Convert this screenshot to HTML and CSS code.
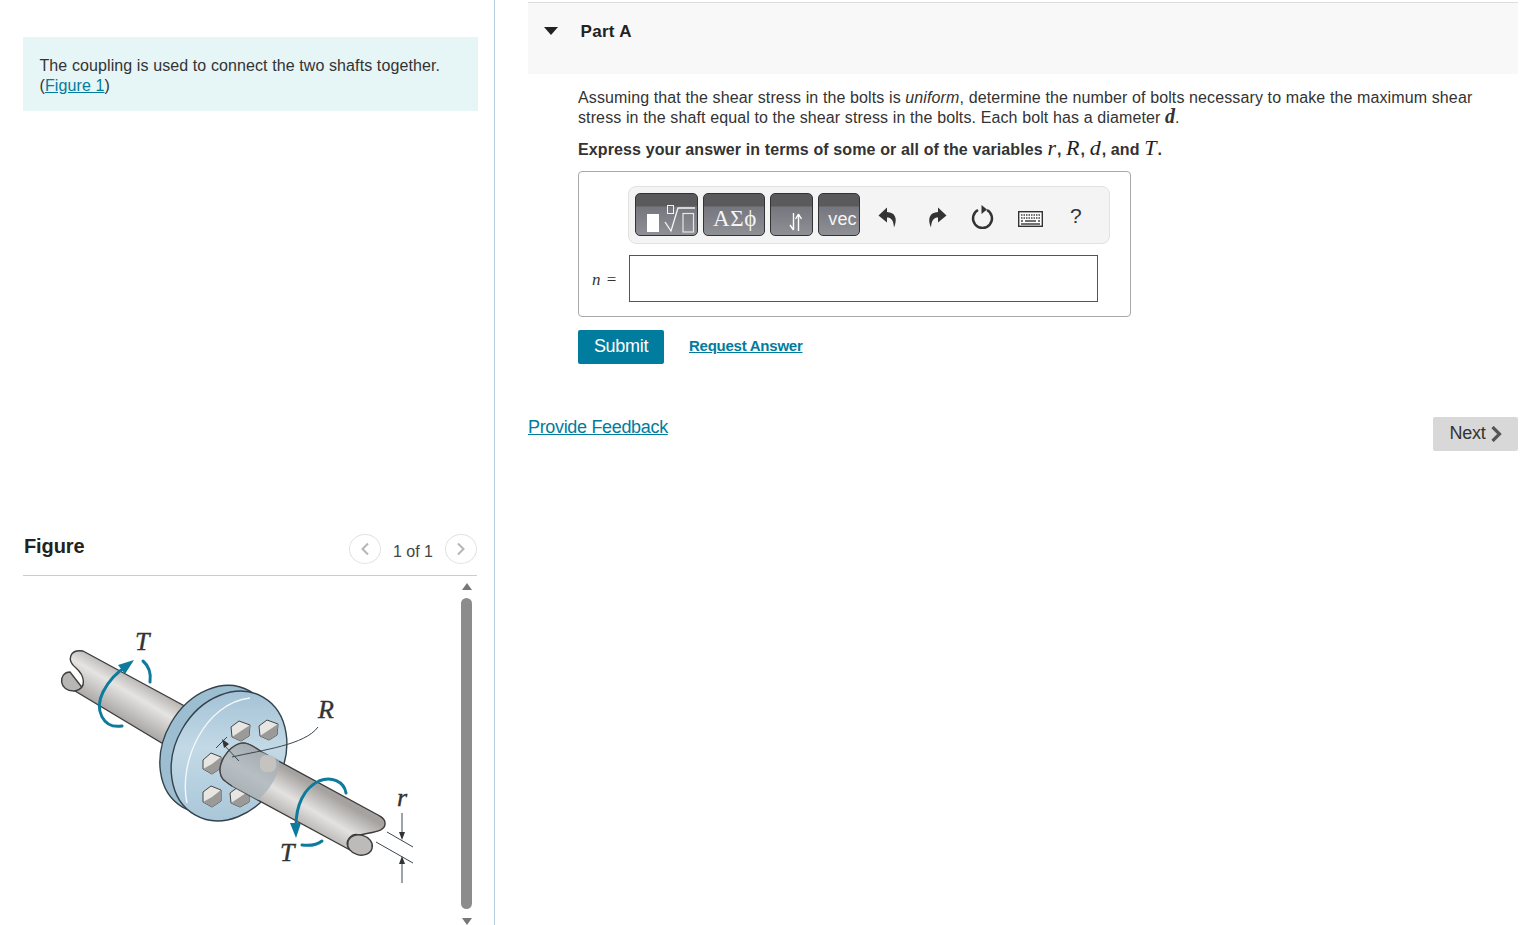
FILE: index.html
```html
<!DOCTYPE html>
<html lang="en">
<head>
<meta charset="utf-8">
<title>Part A</title>
<link rel="stylesheet" href="styles.css">
</head>
<body>
<div class="page">
  <aside class="left">
    <div class="intro">
      <p>The coupling is used to connect the two shafts together.<br>(<a href="#">Figure 1</a>)</p>
    </div>
    <section class="figure">
      <header class="fig-head">
        <h2>Figure</h2>
        <div class="pager">
          <span class="circle"><svg width="10" height="14" viewBox="0 0 10 14"><path d="M8 1.500 2.500 7 8 12.500" fill="none" stroke="#b5b5b5" stroke-width="2"/></svg></span>
          <span class="count">1 of 1</span>
          <span class="circle"><svg width="10" height="14" viewBox="0 0 10 14"><path d="M2 1.500 7.500 7 2 12.500" fill="none" stroke="#b5b5b5" stroke-width="2"/></svg></span>
        </div>
      </header>
      <div class="fig-body">
        <svg class="art" width="436" height="349" viewBox="23 576 436 349">
          <defs>
            <linearGradient id="sh1" gradientUnits="userSpaceOnUse" x1="145" y1="676" x2="118" y2="722">
              <stop offset="0" stop-color="#a5a2a0"/><stop offset=".42" stop-color="#e6e4e2"/><stop offset="1" stop-color="#a09d9b"/>
            </linearGradient>
            <linearGradient id="sh2" gradientUnits="userSpaceOnUse" x1="322" y1="790" x2="295" y2="836">
              <stop offset="0" stop-color="#a5a2a0"/><stop offset=".42" stop-color="#e4e2e0"/><stop offset="1" stop-color="#9a9795"/>
            </linearGradient>
            <linearGradient id="fl" gradientUnits="userSpaceOnUse" x1="170" y1="790" x2="290" y2="720">
              <stop offset="0" stop-color="#a8c6d8"/><stop offset=".55" stop-color="#c3d9e6"/><stop offset="1" stop-color="#a0c0d4"/>
            </linearGradient>
          </defs>
          <path d="M75 691C58 692 58 672 70 672L84 690Z" fill="#b8b6b4" stroke="#3f3f3f" stroke-width="1.400"/>
          <path d="M83 651 192 710 165 745 75 691C88 688 84 675 76 668 66 660 70 649 83 651Z" fill="url(#sh1)" stroke="#3c3c3c" stroke-width="1.400" stroke-linejoin="round"/>
          <ellipse cx="216" cy="749" rx="67" ry="52" transform="rotate(-60 216 749)" fill="#9dbdd1" stroke="#33424c" stroke-width="1.400"/>
          <ellipse cx="229" cy="756" rx="68" ry="54" transform="rotate(-60 229 756)" fill="url(#fl)" stroke="#33424c" stroke-width="1.400"/>
          <path d="M187 803C178 762 205 703 250 698" fill="none" stroke="#f2f8fb" stroke-width="1.400"/>
          <g stroke="#444" stroke-width="1" stroke-linejoin="round">
            <path d="M231 727 239 721 250 725 249 736 241 741 232 737Z" fill="#e8e6e3"/>
            <path d="M259 726 267 720 278 724 277 735 269 740 260 736Z" fill="#e8e6e3"/>
            <path d="M203 760 211 753 221 757 221 768 212 774 203 769Z" fill="#e8e6e3"/>
            <path d="M203 792 211 786 221 790 221 801 212 807 203 802Z" fill="#e8e6e3"/>
            <path d="M230 793 238 787 249 791 249 802 240 807 231 803Z" fill="#e8e6e3"/>
          </g>
          <g fill="#9b9a98">
            <path d="M232 737 241 731 250 725 249 736 241 741Z"/><path d="M260 736 269 730 278 724 277 735 269 740Z"/>
            <path d="M212 764 221 757 221 768 212 774 203 769Z"/><path d="M212 797 221 790 221 801 212 807 203 802Z"/><path d="M240 797 249 791 249 802 240 807 231 803Z"/>
          </g>
          <path d="M243 743C232 744 221 757 220 769 220 778 223 780 232 786L350 850C343 842 351 832 360 835 372 832 386 832 385 823 385 818 381 817 378 815L262 752C254 747 249 743 243 743Z" fill="url(#sh2)" stroke="#3c3c3c" stroke-width="1.400" stroke-linejoin="round"/>
          <path d="M243 743C232 744 221 757 220 769 220 778 223 780 232 786L258 800C270 790 281 772 279 760L262 752C254 747 249 743 243 743Z" fill="#a8b3b9" fill-opacity=".75"/>
          <path d="M243 743C232 744 221 757 220 769 220 778 223 780 232 786M243 743C250 743 254 747 262 752" fill="none" stroke="#454545" stroke-width="1.200"/>
          <rect x="260" y="755" width="16" height="17" rx="6" fill="#c8c4c0" opacity=".9"/>
          <ellipse cx="360" cy="845" rx="12.500" ry="10" fill="#bdbbb9" stroke="#3c3c3c" stroke-width="1.400" transform="rotate(15 360 845)"/>
          <g fill="none" stroke="#3a4750" stroke-width="1">
            <path d="M318 727C305 745 262 750 232 757"/>
            <path d="M216 748 227 737M224 745 239 761"/>
            <path d="M387 832 413 847M376 842 413 863M402 813V837M402 883V858"/>
          </g>
          <path d="M399 832 402 840 405 832ZM399 864 402 856 405 864ZM222 739 229 744 224 748Z" fill="#333"/>
          <g fill="none" stroke="#0e7b9d" stroke-width="3" stroke-linecap="round">
            <path d="M122 726C103 729 94 710 103 692 108 682 117 672 127 666"/>
            <path d="M143 661C150 667 151 675 150 682"/>
            <path d="M346 793C344 781 331 776 319 781 304 788 296 805 296 826"/>
            <path d="M302 845C310 846 317 845 322 841"/>
          </g>
          <path d="M134 660 118 665 125 674ZM296 838 290 823 301 823Z" fill="#0e7b9d"/>
          <text class="lbl" x="135" y="650">T</text>
          <text class="lbl" x="318" y="718">R</text>
          <text class="lbl" x="397" y="806">r</text>
          <text class="lbl" x="280" y="861">T</text>
        </svg>
        <div class="scroll">
          <span class="arr-up"></span>
          <span class="thumb"></span>
          <span class="arr-down"></span>
        </div>
      </div>
    </section>
  </aside>
  <main class="right">
    <div class="part-head">
      <span class="caret"></span>
      <h3>Part A</h3>
    </div>
    <div class="part-body">
      <p class="q">Assuming that the shear stress in the bolts is <em>uniform</em>, determine the number of bolts necessary to make the maximum shear stress in the shaft equal to the shear stress in the bolts. Each bolt has a diameter <b class="mvar">d</b>.</p>
      <p class="ask">Express your answer in terms of some or all of the variables <i class="m">r</i>, <i class="m">R</i>, <i class="m">d</i>, and <i class="m">T</i>.</p>
      <div class="answer">
        <div class="toolbar">
          <span class="btn w63">
            <span class="ico">
              <svg width="54" height="30" viewBox="0 0 54 30">
                <rect x="6" y="9" width="12" height="18" fill="#fff"/>
                <rect x="26.500" y=".5" width="6" height="8" fill="none" stroke="#f4f4f4"/>
                <path d="M24 17 30 26 37 3H54" fill="none" stroke="#f4f4f4" stroke-width="1.300"/>
                <rect x="42" y="8.500" width="10.500" height="18.500" fill="none" stroke="#e6e6e6" stroke-width="1.200"/>
              </svg>
            </span>
          </span>
          <span class="btn w62"><span class="sym">ΑΣϕ</span></span>
          <span class="btn w43">
            <svg class="arrows" width="16" height="18" viewBox="0 0 16 18"><path d="M5.500 0V17M5.500 17 2 12M10.500 18V1M10.500 1 7.500 6M10.500 1 13.500 6" fill="none" stroke="#fff" stroke-width="1.400"/></svg>
          </span>
          <span class="btn w42"><span class="vec">vec</span></span>
          <div class="tools">
            <svg class="t1" width="20" height="22" viewBox="0 0 20 22"><path d="M9 1.500 0.500 9.500 9 16.500V11.500C13 11.500 15.500 14 16 21.500 20 12 17 6.500 9 6Z" fill="#333"/></svg>
            <svg class="t2" width="20" height="22" viewBox="0 0 20 22"><path d="M11 1.500 19.500 9.500 11 16.500V11.500C7 11.500 4.500 14 4 21.500 0 12 3 6.500 11 6Z" fill="#333"/></svg>
            <svg class="t3" width="24" height="26" viewBox="0 0 24 26"><path d="M7 6A9.500 9.500 0 1 0 16 6" fill="none" stroke="#333" stroke-width="2.400"/><path d="M10.500 1V10L16 5.500Z" fill="#333"/></svg>
            <svg class="t4" width="25" height="16" viewBox="0 0 25 16"><rect x=".7" y=".7" width="23.600" height="14.600" fill="#fff" stroke="#333" stroke-width="1.400"/><path d="M3 4H22M3 7H22" stroke="#444" stroke-width="1.500" stroke-dasharray="1.500 1"/><path d="M3 10H5M7 10H18M20 10H22M3 13H22" stroke="#444" stroke-width="1.400"/></svg>
            <span class="help">?</span>
          </div>
        </div>
        <div class="entry">
          <span class="nlabel"><i>n</i> =</span>
          <div class="input"></div>
        </div>
      </div>
      <div class="actions">
        <button class="submit" type="button">Submit</button>
        <a class="req" href="#">Request Answer</a>
      </div>
    </div>
    <div class="foot">
      <a class="feedback" href="#">Provide Feedback</a>
      <button class="next" type="button">Next <svg width="13" height="16" viewBox="0 0 13 16"><path d="M2.500 1 9.500 8 2.500 15" fill="none" stroke="#555" stroke-width="3.200"/></svg></button>
    </div>
  </main>
</div>
</body>
</html>
```

FILE: styles.css
```css
* { box-sizing: border-box; }
html, body { margin: 0; padding: 0; height: 925px; overflow: hidden; background: #fff; }
body { font-family: "Liberation Sans", Arial, sans-serif; font-size: 16px; color: #333; }
a { color: #007c9e; }
p, h2, h3 { margin: 0; }

.page { display: flex; height: 925px; }
.left { width: 495px; flex: none; border-right: 1px solid #b4cde2; padding: 37px 16px 0 23px; }
.intro { height: 74px; background: #e6f5f5; padding: 19px 16px 0 16.500px; line-height: 20px; font-size: 16px; letter-spacing: .1px; }

.figure { margin-top: 418px; }
.fig-head { display: flex; justify-content: space-between; align-items: flex-start; height: 47px; border-bottom: 1px solid #ccc; width: 454px; padding-left: 1px; }
.fig-head h2 { font-size: 20px; font-weight: bold; color: #222; line-height: 24px; margin-top: 5px; letter-spacing: -.1px; }
.pager { display: flex; align-items: flex-start; color: #444; margin-top: 5px; }
.circle { width: 32px; height: 30px; border: 1px solid #e2e2e2; border-radius: 50%; display: flex; align-items: center; justify-content: center; }
.count { margin: 8px 12px 0; line-height: 20px; }

.fig-body { display: flex; height: 349px; width: 455px; }
.art { display: block; flex: none; }
.lbl { font-family: "Liberation Serif", serif; font-style: italic; font-size: 26px; fill: #333; stroke: #333; stroke-width: .4px; }
.scroll { width: 11px; margin-left: 2px; display: flex; flex-direction: column; align-items: center; padding-top: 7px; }
.arr-up { width: 0; height: 0; border: 5px solid transparent; border-top: 0; border-bottom: 7px solid #777; }
.thumb { width: 11px; height: 312px; background: #8c8c8c; border-radius: 6px; margin-top: 8px; }
.arr-down { width: 0; height: 0; border: 5px solid transparent; border-bottom: 0; border-top: 7px solid #777; margin-top: 9px; }

.right { width: 990px; margin-left: 33px; padding-top: 2px; }
.part-head { height: 72px; background: #f8f8f8; border-top: 1px solid #ddd; display: flex; align-items: flex-start; padding: 18px 0 0 16px; }
.caret { width: 0; height: 0; border: 7px solid transparent; border-top: 8px solid #222; border-bottom: 0; margin-top: 6px; }
.part-head h3 { font-size: 17px; font-weight: bold; color: #222; margin-left: 22.500px; line-height: 22px; letter-spacing: .3px; }

.part-body { padding: 14px 0 0 50px; }
.q { line-height: 20px; letter-spacing: .115px; width: 920px; }
.mvar { font-family: "Liberation Serif", serif; font-style: italic; font-size: 20px; line-height: 16px; }
.ask { font-weight: bold; margin-top: 11px; line-height: 22px; letter-spacing: .115px; }
.m { font-family: "Liberation Serif", serif; font-style: italic; font-weight: normal; font-size: 22px; line-height: 18px; color: #222; letter-spacing: 1px; }

.answer { width: 553px; height: 146px; border: 1px solid #a8a8a8; border-radius: 4px; margin-top: 10px; padding: 14px 0 0 49px; }
.toolbar { width: 482px; height: 58px; background: #f4f4f4; border: 1px solid #e2e2e2; border-radius: 8px; padding: 6px 0 0 6px; display: flex; align-items: flex-start; gap: 5px; }
.btn { display: block; height: 43px; border: 1px solid #333; border-radius: 5px; background: linear-gradient(#5a5a5c 0, #5a5a5c 12px, #76767e 13px, #8f8f96 100%); overflow: hidden; color: #f4f4f4; text-align: center; }
.w63 { width: 63px; } .w62 { width: 62px; } .w43 { width: 43px; } .w42 { width: 42px; }
.ico { display: block; margin-left: 5px; margin-top: 11px; height: 30px; }
.ico svg { display: block; }
.sym { display: block; font-family: "Liberation Serif", serif; font-size: 23px; line-height: 24px; margin-top: 13px; letter-spacing: .6px; padding-left: 2px; }
.arrows { display: block; margin: 19px 0 0 17px; }
.vec { display: block; font-size: 18px; line-height: 22px; margin-top: 14px; padding-left: 7px; letter-spacing: .1px; }
.tools { display: flex; align-items: center; height: 48px; flex: 1; }
.tools svg { display: block; flex: none; }
.t1 { margin-left: 13px; }
.t2 { margin-left: 29px; }
.t3 { margin-left: 24px; }
.t4 { margin-left: 23px; margin-top: 3px; }
.help { margin-left: 27px; font-size: 21px; color: #333; margin-top: -3px; }

.entry { display: flex; align-items: center; margin-top: 11px; margin-left: -36px; }
.nlabel { font-family: "Liberation Serif", serif; font-size: 17px; width: 36px; color: #333; letter-spacing: 1px; white-space: nowrap; padding-top: 3px; }
.input { width: 469px; height: 47px; border: 1px solid #555; background: #fff; margin-left: 1px; flex: none; }

.actions { display: flex; align-items: flex-start; margin-top: 13px; }
.submit { width: 86px; height: 34px; background: #007c9e; color: #fff; border: 0; border-radius: 2px; font: 18px "Liberation Sans", Arial, sans-serif; letter-spacing: -.3px; padding: 0 0 1px; }
.req { margin-left: 25px; margin-top: 7px; font-size: 15px; font-weight: bold; letter-spacing: -.25px; }

.foot { display: flex; justify-content: space-between; align-items: flex-start; margin-top: 53px; }
.feedback { font-size: 18px; letter-spacing: -.33px; line-height: 20px; }
.next { width: 85px; height: 34px; background: #d8d8d8; border: 0; border-radius: 2px; font: 18px "Liberation Sans", Arial, sans-serif; color: #333; display: flex; align-items: center; justify-content: center; gap: 5px; padding: 0 0 1px 2px; letter-spacing: -.3px; }
.next svg { display: block; }
```
